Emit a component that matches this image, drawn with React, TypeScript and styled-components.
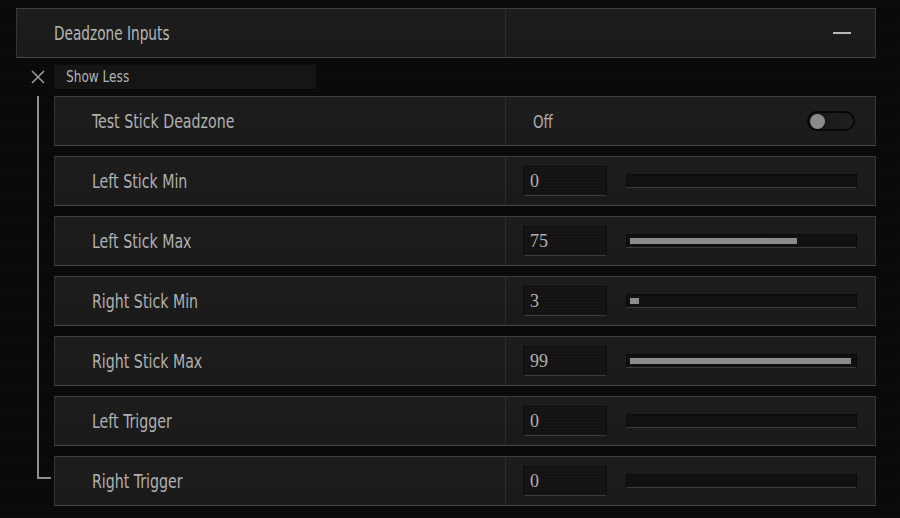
import React from "react";
import styled, { createGlobalStyle, css } from "styled-components";

const GlobalStyle = createGlobalStyle`
  html, body {
    margin: 0;
    padding: 0;
    background: #090909;
  }
  body {
    font-family: "DejaVu Sans Condensed", "Liberation Sans", sans-serif;
    color: #b0b0b0;
  }
`;

/* narrow display face: condensed sans squeezed a little further */
const narrow = (k: number) => css`
  display: inline-block;
  white-space: nowrap;
  transform: scaleX(${k});
  transform-origin: left center;
`;

const Page = styled.div`
  width: 900px;
  height: 518px;
  box-sizing: border-box;
  padding: 8px 24px 0 16px;
  background:
    repeating-linear-gradient(0deg, rgba(255,255,255,0.012) 0 1px, transparent 1px 3px),
    #090909;
  overflow: hidden;
`;

const Panel = styled.div`
  box-sizing: border-box;
  display: grid;
  grid-template-columns: 488px 1fr;
  height: 50px;
  background: linear-gradient(180deg, #1d1d1d 0%, #1a1a1a 100%);
  border: 1px solid #363636;
  border-top-color: #3e3e3e;
  border-bottom-color: #454545;
`;

const Cell = styled.div<{ $divider?: boolean; $pad?: number }>`
  display: flex;
  align-items: center;
  padding-left: ${(p) => p.$pad ?? 0}px;
  border-left: ${(p) => (p.$divider ? "1px solid #2c2c2c" : "none")};
  min-width: 0;
`;

const Title = styled.span`
  font-size: 19px;
  color: #b6b6b6;
  ${narrow(0.8)}
`;

const Collapse = styled.span`
  margin-left: auto;
  margin-right: 24px;
  width: 18px;
  height: 2px;
  background: #b8b8b8;
`;

const Tree = styled.div`
  display: grid;
  grid-template-columns: 38px 822px;
  grid-template-rows: 24px auto;
  row-gap: 7px;
  margin-top: 7px;
`;

const CloseIcon = styled.svg`
  align-self: center;
  margin-left: 15px;
  width: 14px;
  height: 14px;
`;

const ShowLess = styled.div`
  width: 262px;
  height: 24px;
  box-sizing: border-box;
  padding-left: 12px;
  display: flex;
  align-items: center;
  background: #151515;
`;

const ShowLessText = styled.span`
  font-size: 15.5px;
  color: #b4b4b4;
  ${narrow(0.87)}
`;

const Rail = styled.div`
  margin-left: 21px;
  margin-bottom: 27px;
  width: 12px;
  border-left: 2px solid #8e8e8e;
  border-bottom: 2px solid #8e8e8e;
`;

const Rows = styled.div`
  display: flex;
  flex-direction: column;
  gap: 10px;
`;

const Row = styled(Panel)`
  grid-template-columns: 450px 1fr;
`;

const Label = styled.span`
  font-size: 19px;
  color: #b0b0b0;
  ${narrow(0.83)}
`;

const ValueBox = styled.div`
  box-sizing: border-box;
  width: 84px;
  height: 30px;
  padding-left: 6px;
  display: flex;
  align-items: center;
  background:
    repeating-linear-gradient(0deg, rgba(255,255,255,0.018) 0 1px, transparent 1px 3px),
    #131112;
  border: 1px solid #0b0b0b;
  border-bottom-color: #3a3a3a;
  font-family: "Liberation Serif", "DejaVu Serif", serif;
  font-size: 18px;
  color: #b2b2b2;
`;

const Track = styled.div`
  box-sizing: border-box;
  margin-left: 19px;
  width: 231px;
  height: 14px;
  padding: 3px;
  background: #121011;
  border: 1px solid #0a0a0a;
  border-bottom-color: #3c3c3c;
`;

const Fill = styled.div`
  height: 6px;
  background: #8c8c8c;
`;

const OffText = styled.span`
  margin-left: 10px;
  font-size: 18px;
  color: #b0b0b0;
  ${narrow(0.83)}
`;

const Switch = styled.div`
  box-sizing: border-box;
  margin-left: auto;
  margin-right: 20px;
  width: 48px;
  height: 20px;
  border-radius: 10px;
  padding: 0 0 0 1px;
  display: flex;
  align-items: center;
  background: linear-gradient(90deg, #161616, #202020);
  border: 2px solid #070707;
`;

const Knob = styled.div`
  width: 15px;
  height: 15px;
  border-radius: 50%;
  background: #8a8a8a;
`;

type Slider = { label: string; value: number };

const sliders: Slider[] = [
  { label: "Left Stick Min", value: 0 },
  { label: "Left Stick Max", value: 75 },
  { label: "Right Stick Min", value: 3 },
  { label: "Right Stick Max", value: 99 },
  { label: "Left Trigger", value: 0 },
  { label: "Right Trigger", value: 0 },
];

function fillWidth(v: number) {
  if (v <= 0) return 0;
  return Math.max(9, Math.round((223 * v) / 100));
}

export default function App() {
  return (
    <>
      <GlobalStyle />
      <Page>
        <Panel>
          <Cell $pad={37}>
            <Title>Deadzone Inputs</Title>
          </Cell>
          <Cell $divider>
            <Collapse />
          </Cell>
        </Panel>

        <Tree>
          <CloseIcon viewBox="0 0 14 14">
            <path d="M1 1 L13 13 M13 1 L1 13" stroke="#9a9a9a" strokeWidth="1.6" fill="none" />
          </CloseIcon>
          <ShowLess>
            <ShowLessText>Show Less</ShowLessText>
          </ShowLess>
          <Rail />
          <Rows>
            <Row>
              <Cell $pad={37}>
                <Label>Test Stick Deadzone</Label>
              </Cell>
              <Cell $divider $pad={17}>
                <OffText>Off</OffText>
                <Switch>
                  <Knob />
                </Switch>
              </Cell>
            </Row>
            {sliders.map((s) => (
              <Row key={s.label}>
                <Cell $pad={37}>
                  <Label>{s.label}</Label>
                </Cell>
                <Cell $divider $pad={17}>
                  <ValueBox>{s.value}</ValueBox>
                  <Track>
                    <Fill style={{ width: fillWidth(s.value) }} />
                  </Track>
                </Cell>
              </Row>
            ))}
          </Rows>
        </Tree>
      </Page>
    </>
  );
}
